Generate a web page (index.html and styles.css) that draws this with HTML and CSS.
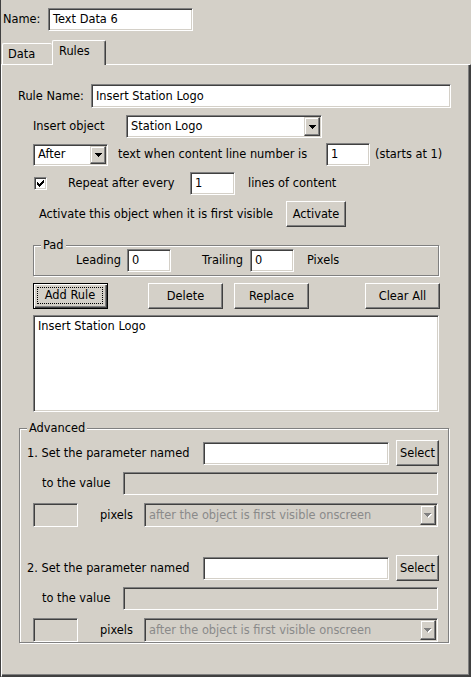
FILE: index.html
```html
<!DOCTYPE html>
<html>
<head>
<meta charset="utf-8">
<link rel="stylesheet" href="styles.css">
</head>
<body>
<div class="window">
  <div class="name-row">
    <span class="name-lbl">Name:</span>
    <div class="sunk field name-field">Text Data 6</div>
  </div>
  <div class="tabs">
    <div class="tab tab-data">Data</div>
    <div class="tab tab-rules">Rules</div>
  </div>
  <div class="panel">
    <div class="row row-rulename">
      <span class="lbl lbl-rulename">Rule Name:</span>
      <div class="sunk field f-rulename">Insert Station Logo</div>
    </div>
    <div class="row row-insert">
      <span class="lbl lbl-insert">Insert object</span>
      <div class="sunk select s-insert"><span class="sel-text">Station Logo</span><span class="dd"><svg width="7" height="4" viewBox="0 0 7 4"><path d="M0 0h7v1H0zM1 1h5v1H1zM2 2h3v1H2zM3 3h1v1H3z" fill="#000"/></svg></span></div>
    </div>
    <div class="row row-after">
      <div class="sunk select s-after"><span class="sel-text">After</span><span class="dd"><svg width="7" height="4" viewBox="0 0 7 4"><path d="M0 0h7v1H0zM1 1h5v1H1zM2 2h3v1H2zM3 3h1v1H3z" fill="#000"/></svg></span></div>
      <span class="lbl lbl-when">text when content line number is</span>
      <div class="sunk field f-line">1</div>
      <span class="lbl lbl-starts">(starts at 1)</span>
    </div>
    <div class="row row-repeat">
      <span class="sunk check"><svg width="9" height="9" viewBox="0 0 9 9"><path d="M1 3h1v3H1zM2 4h1v3H2zM3 5h1v3H3zM4 4h1v3H4zM5 3h1v3H5zM6 2h1v3H6zM7 1h1v3H7z" fill="#000"/></svg></span>
      <span class="lbl lbl-repeat">Repeat after every</span>
      <div class="sunk field f-every">1</div>
      <span class="lbl lbl-lines">lines of content</span>
    </div>
    <div class="row row-activate">
      <span class="lbl lbl-activate">Activate this object when it is first visible</span>
      <div class="btn b-activate">Activate</div>
    </div>
    <div class="group g-pad">
      <span class="legend">Pad</span>
      <div class="row row-pad">
        <span class="lbl lbl-leading">Leading</span>
        <div class="sunk field f-pad">0</div>
        <span class="lbl lbl-trailing">Trailing</span>
        <div class="sunk field f-pad">0</div>
        <span class="lbl lbl-pixels">Pixels</span>
      </div>
    </div>
    <div class="row row-buttons">
      <div class="btn btn-default b-add"><span class="focus">Add Rule</span></div>
      <div class="btn b-delete">Delete</div>
      <div class="btn b-replace">Replace</div>
      <div class="btn b-clear">Clear All</div>
    </div>
    <div class="sunk listbox"><div class="list-item">Insert Station Logo</div></div>
    <div class="group g-adv">
      <span class="legend">Advanced</span>
      <div class="param">
        <div class="row row-pname">
          <span class="lbl lbl-pname">1. Set the parameter named</span>
          <div class="sunk field f-pname"></div>
          <div class="btn b-select">Select</div>
        </div>
        <div class="row row-pvalue">
          <span class="lbl lbl-pvalue">to the value</span>
          <div class="sunk field disabled f-pvalue"></div>
        </div>
        <div class="row row-ppx">
          <div class="sunk field disabled f-ppx"></div>
          <span class="lbl lbl-ppx">pixels</span>
          <div class="sunk select disabled s-when"><span class="sel-text">after the object is first visible onscreen</span><span class="dd"><svg width="8" height="5" viewBox="0 0 8 5"><path d="M1 1h7v1H1zM2 2h5v1H2zM3 3h3v1H3zM4 4h1v1H4z" fill="#fff"/><path d="M0 0h7v1H0zM1 1h5v1H1zM2 2h3v1H2zM3 3h1v1H3z" fill="#808080"/></svg></span></div>
        </div>
      </div>
      <div class="param param-2">
        <div class="row row-pname">
          <span class="lbl lbl-pname">2. Set the parameter named</span>
          <div class="sunk field f-pname"></div>
          <div class="btn b-select">Select</div>
        </div>
        <div class="row row-pvalue">
          <span class="lbl lbl-pvalue">to the value</span>
          <div class="sunk field disabled f-pvalue"></div>
        </div>
        <div class="row row-ppx">
          <div class="sunk field disabled f-ppx"></div>
          <span class="lbl lbl-ppx">pixels</span>
          <div class="sunk select disabled s-when"><span class="sel-text">after the object is first visible onscreen</span><span class="dd"><svg width="8" height="5" viewBox="0 0 8 5"><path d="M1 1h7v1H1zM2 2h5v1H2zM3 3h3v1H3zM4 4h1v1H4z" fill="#fff"/><path d="M0 0h7v1H0zM1 1h5v1H1zM2 2h3v1H2zM3 3h1v1H3z" fill="#808080"/></svg></span></div>
        </div>
      </div>
    </div>
  </div>
</div>
</body>
</html>
```

FILE: styles.css
```css
* { box-sizing: border-box; }
html, body { margin: 0; padding: 0; }
body {
  background: #d4d0c8;
  font-family: "DejaVu Sans", Tahoma, sans-serif;
  font-size: 11.4px;
  line-height: 13px;
  color: #000;
}
.window {
  width: 471px;
  height: 677px;
  background: #d4d0c8;
  border-left: 1px solid #404040;
  overflow: hidden;
}
.row { display: flex; align-items: center; }
.lbl { flex: none; white-space: nowrap; }

/* 3D primitives */
.sunk {
  border: 1px solid;
  border-color: #808080 #fff #fff #808080;
  box-shadow: inset 1px 1px 0 #404040, inset -1px -1px 0 #d4d0c8;
  background: #fff;
  flex: none;
}
.sunk.disabled { background: #d4d0c8; }
.field {
  display: flex;
  align-items: center;
  padding: 0 3px 0 4px;
  white-space: nowrap;
  overflow: hidden;
}
.btn {
  flex: none;
  display: flex;
  align-items: center;
  justify-content: center;
  border: 1px solid;
  border-color: #fff #404040 #404040 #fff;
  box-shadow: inset -1px -1px 0 #808080, inset 1px 1px 0 #d4d0c8;
  background: #d4d0c8;
  white-space: nowrap;
}
.btn-default {
  border: 1px solid #000;
  box-shadow: inset 1px 1px 0 #fff, inset -1px -1px 0 #404040, inset -2px -2px 0 #808080;
  padding: 3px 4px 4px 3px;
}
.focus {
  display: flex;
  align-items: center;
  justify-content: center;
  width: 100%;
  height: 100%;
  border: 1px dotted #000;
}
.select {
  display: flex;
  align-items: stretch;
  padding: 1px;
}
.sel-text {
  flex: 1;
  display: flex;
  align-items: center;
  padding-left: 3px;
  white-space: nowrap;
  overflow: hidden;
}
.select.disabled .sel-text { color: #8a8a8a; }
.dd {
  flex: none;
  width: 16px;
  display: flex;
  align-items: center;
  justify-content: center;
  border: 1px solid;
  border-color: #d4d0c8 #404040 #404040 #d4d0c8;
  box-shadow: inset -1px -1px 0 #808080, inset 1px 1px 0 #fff;
  background: #d4d0c8;
}
.dd svg { display: block; }
.check {
  width: 13px;
  height: 13px;
  display: flex;
  align-items: center;
  justify-content: center;
}
.check svg { display: block; }

/* Group boxes */
.group {
  border: 1px solid #808080;
  box-shadow: inset 1px 1px 0 #fff, 1px 1px 0 #fff;
}
.legend {
  display: block;
  width: max-content;
  margin: -8px 0 -3px 7px;
  padding: 0 2px;
  line-height: 14px;
  background: #d4d0c8;
}

/* Name row */
.name-row {
  display: flex;
  align-items: center;
  margin-top: 8px;
  height: 23px;
  padding-left: 2px;
}
.name-lbl { width: 45px; }
.name-field { width: 145px; height: 23px; }

/* Tabs */
.tabs {
  display: flex;
  align-items: flex-end;
  margin-top: 9px;
  height: 24px;
  padding-left: 1px;
}
.tab {
  border-top: 1px solid #fff;
  border-left: 1px solid #fff;
  border-radius: 2px 2px 0 0;
  background: #d4d0c8;
}
.tab-data {
  width: 50px;
  height: 21px;
  padding: 4px 0 0 5px;
}
.tab-rules {
  position: relative;
  z-index: 1;
  width: 54px;
  height: 25px;
  margin-bottom: -1px;
  padding: 4px 0 0 6px;
  border-right: 1px solid #404040;
  box-shadow: inset -1px 0 0 #808080;
}

/* Panel */
.panel {
  width: 470px;
  height: 613px;
  border-top: 1px solid #fff;
  border-left: 1px solid #fff;
  border-right: 1px solid #404040;
  border-bottom: 1px solid #404040;
  box-shadow: inset -1px -1px 0 #404040, inset -2px -2px 0 #808080;
  display: flex;
  flex-direction: column;
  align-items: flex-start;
}

.row-rulename { margin: 19px 0 0 16px; height: 24px; }
.lbl-rulename { width: 73px; }
.f-rulename { width: 360px; height: 24px; }

.row-insert { margin: 7px 0 0 31px; height: 23px; }
.lbl-insert { width: 93px; }
.s-insert { width: 196px; height: 23px; }

.row-after { margin: 5px 0 0 31px; height: 23px; }
.s-after { width: 75px; height: 22px; }
.lbl-when { width: 208px; margin-left: 10px; }
.f-line { width: 44px; height: 23px; }
.lbl-starts { margin-left: 5px; }

.row-repeat { margin: 6px 0 0 32px; height: 23px; }
.lbl-repeat { width: 122px; margin-left: 21px; }
.f-every { width: 45px; height: 23px; }
.lbl-lines { margin-left: 13px; }

.row-activate { margin: 6px 0 0 37px; height: 26px; }
.lbl-activate { width: 247px; }
.b-activate { width: 60px; height: 26px; }

.g-pad { margin: 18px 0 0 31px; width: 406px; padding-bottom: 3px; }
.row-pad { height: 23px; padding-left: 42px; }
.lbl-leading { width: 51px; }
.f-pad { width: 44px; height: 23px; }
.lbl-trailing { width: 48px; margin-left: 31px; }
.lbl-pixels { margin-left: 13px; }

.row-buttons { margin: 7px 0 0 31px; height: 26px; }
.row-buttons .btn { height: 26px; width: 75px; }
.b-delete { margin-left: 40px; }
.b-replace { margin-left: 11px; }
.b-clear { margin-left: 56px; }

.listbox { margin: 6px 0 0 31px; width: 406px; height: 97px; padding: 3px 3px 0 4px; }
.list-item { line-height: 14px; white-space: nowrap; }

.g-adv { margin: 16px 0 0 17px; width: 430px; }
.param { padding-top: 8px; }
.param-2 { padding-top: 28px; }
.row-pname { height: 26px; padding-left: 7px; }
.lbl-pname { width: 176px; }
.f-pname { width: 186px; height: 23px; }
.b-select { width: 43px; height: 26px; margin-left: 7px; }
.row-pvalue { height: 23px; margin-top: 6px; padding-left: 22px; }
.lbl-pvalue { width: 81px; }
.f-pvalue { width: 315px; height: 23px; }
.row-ppx { height: 24px; margin-top: 8px; padding-left: 13px; }
.f-ppx { width: 45px; height: 24px; }
.lbl-ppx { width: 44px; margin-left: 22px; }
.s-when { width: 294px; height: 24px; }
```
